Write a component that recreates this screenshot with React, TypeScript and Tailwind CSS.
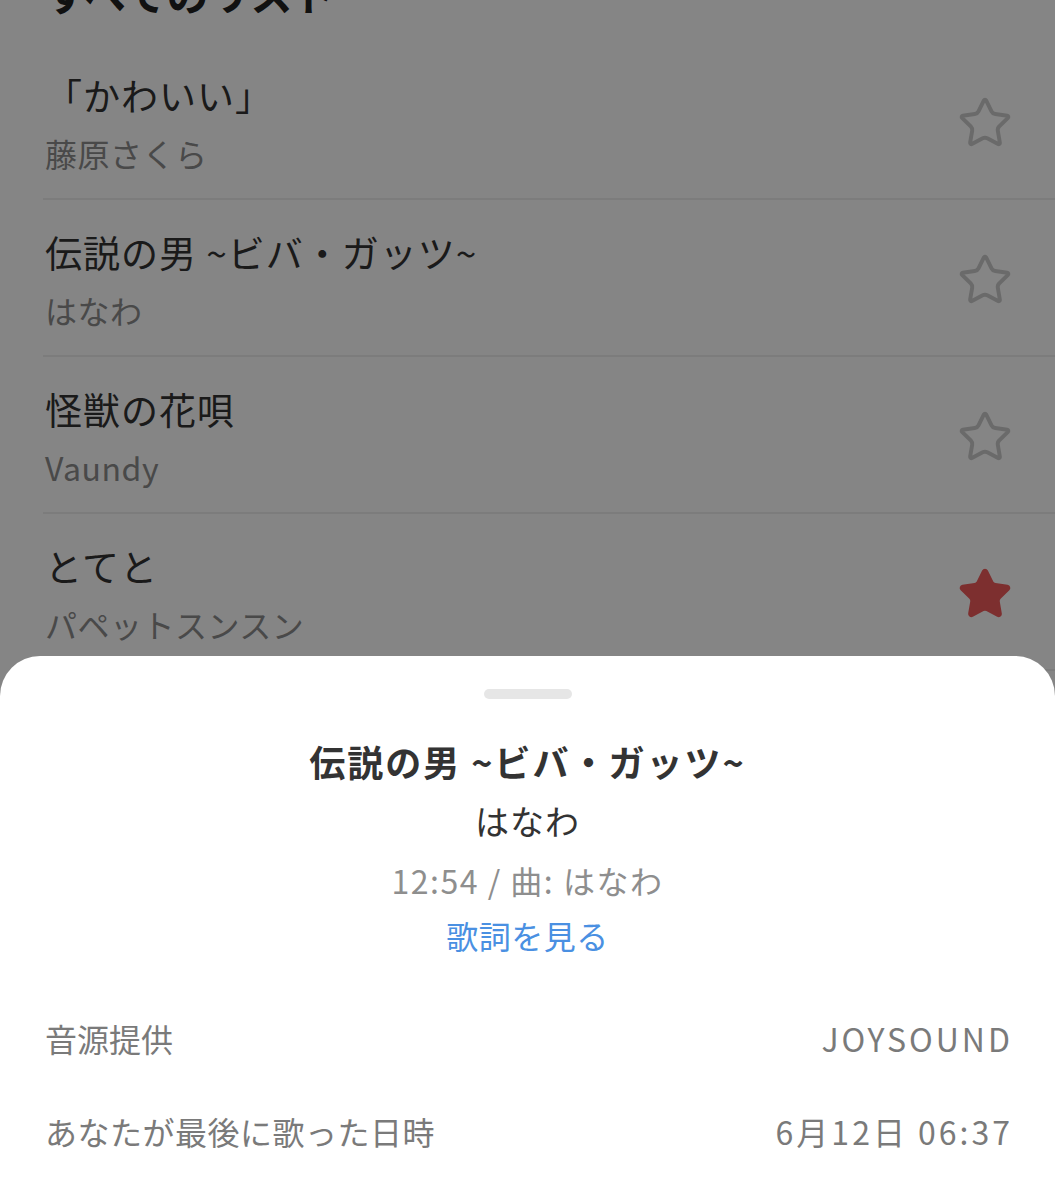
import { Star } from "lucide-react";

const songs = [
  { title: "「かわいい」", artist: "藤原さくら", fav: false },
  { title: "伝説の男 ~ビバ・ガッツ~", artist: "はなわ", fav: false },
  { title: "怪獣の花唄", artist: "Vaundy", fav: false },
  { title: "とてと", artist: "パペットスンスン", fav: true },
  { title: "ハッピーエンド", artist: "back number", fav: false },
];

const jp = "font-['Noto_Sans_CJK_JP','Noto_Sans',sans-serif]";

export default function App() {
  return (
    <div className={`relative h-[1200px] w-[1055px] overflow-hidden bg-white ${jp}`}>
      <h1 className="-mt-[29px] mb-[28px] pl-[45px] text-[42px] leading-[44px] font-bold text-[#222]">
        すべてのリスト
      </h1>

      <ul className="ml-[43px]">
        {songs.map((s) => (
          <li
            key={s.title}
            className="flex items-center border-b-2 border-[#eeeeee] pt-[30px] pb-[25px] pl-[2px] pr-[42px]"
          >
            <div className="flex-1">
              <p className="text-[37px] leading-[44px] tracking-[1px] text-[#333]">{s.title}</p>
              <p className="mt-[16px] text-[32px] leading-[40px] tracking-[0.5px] text-[#8c8c8c]">{s.artist}</p>
            </div>
            <Star
              size={56}
              strokeWidth={1.7}
              className={s.fav ? "fill-[#ef5b5b] text-[#ef5b5b]" : "text-[#cccccc]"}
            />
          </li>
        ))}
      </ul>

      <div className="absolute inset-0 bg-black/[0.48]" />

      <section className="absolute inset-x-0 top-[656px] bottom-0 rounded-t-[40px] bg-white pt-[33px]">
        <div className="mx-auto h-[10px] w-[88px] rounded-full bg-[#e6e6e6]" />
        <div className="mt-[38px] text-center">
          <h2 className="text-[36px] leading-[48px] font-bold tracking-[2px] text-[#333]">伝説の男 ~ビバ・ガッツ~</h2>
          <p className="mt-[12px] text-[34px] leading-[48px] tracking-[1px] text-[#333]">はなわ</p>
          <p className="mt-[13px] text-[32px] leading-[44px] tracking-[1.5px] text-[#8e8e8e]">12:54 / 曲: はなわ</p>
          <button className="mt-[11px] text-[32px] leading-[44px] tracking-[0.5px] text-[#4a90e2]">歌詞を見る</button>
        </div>

        <dl className="mt-[34px] px-[45px] text-[32px] leading-[44px] text-[#7a7a7a]">
          <div className="flex h-[93px] items-center justify-between">
            <dt>音源提供</dt>
            <dd className="-mr-[3px] tracking-[3px]">JOYSOUND</dd>
          </div>
          <div className="flex h-[93px] items-center justify-between">
            <dt className="tracking-[0.5px]">あなたが最後に歌った日時</dt>
            <dd className="-mr-[3px] tracking-[3px]">6月12日 06:37</dd>
          </div>
        </dl>
      </section>
    </div>
  );
}
